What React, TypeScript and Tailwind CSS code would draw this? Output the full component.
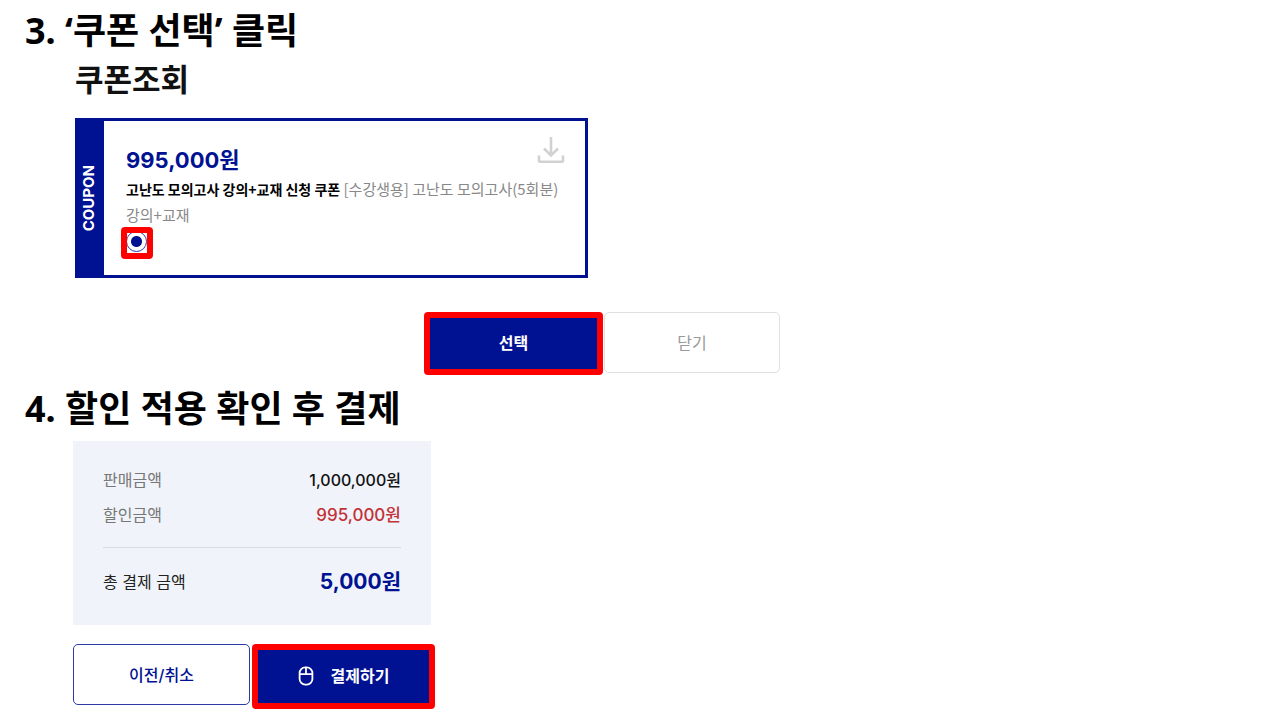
import type { ReactNode } from 'react';

const koreanFont = "font-['Noto_Sans_CJK_KR',sans-serif]";
const uiFont = "font-[Inter,'Noto_Sans_CJK_KR',sans-serif]";

function StepHeading({ children }: { children: ReactNode }) {
  return (
    <h2 className="font-['Noto_Sans','Noto_Sans_CJK_KR',sans-serif] text-[36px] leading-[46px] font-bold text-black">
      {children}
    </h2>
  );
}

function DownloadIcon() {
  return (
    <svg viewBox="0 0 28 28" className="size-7" fill="none" stroke="#d2d2d2" strokeWidth="2.6" aria-hidden="true">
      <path d="M14 1v18M7 12.5l7 7 7-7M2 19.5v5.2a1 1 0 0 0 1 1h22a1 1 0 0 0 1-1v-5.2" />
    </svg>
  );
}

function MouseIcon() {
  return (
    <svg viewBox="0 0 16 20" className="h-5 w-4" fill="none" stroke="currentColor" strokeWidth="1.8" aria-hidden="true">
      <rect x="1.6" y="1.4" width="12.8" height="17.2" rx="5.6" />
      <path d="M1.6 8.2h12.8M8 1.4v6.8" />
    </svg>
  );
}

function CouponCard() {
  return (
    <article className="relative flex w-full max-w-[513px] border-[3px] border-[#001292] bg-white">
      <div className="flex w-[26px] shrink-0 items-center justify-center bg-[#001292]">
        <span className="rotate-180 pl-1 text-[15px] leading-5 font-bold text-white [writing-mode:vertical-rl]">COUPON</span>
      </div>
      <div className="flex-1 pt-[23px] pr-5 pb-4 pl-[22px]">
        <p className="text-[22px] leading-8 font-bold text-[#001292]">995,000원</p>
        <p className={`${koreanFont} text-[15px] leading-[25px] text-[#888888]`}>
          <label htmlFor="coupon" className="text-[14px] font-bold text-black">
            고난도 모의고사 강의+교재 신청 쿠폰
          </label>{' '}
          [수강생용] 고난도 모의고사(5회분) 강의+교재
        </p>
        <div className="-ml-[5px] flex size-8 items-start justify-center rounded-[4px] bg-[#ff0000] p-[6px]">
          <div className="flex size-5 items-end justify-start overflow-hidden bg-white pb-px">
            <input
              id="coupon"
              type="radio"
              name="coupon"
              defaultChecked
              className="-ml-px size-[21px] shrink-0 appearance-none rounded-full border border-[#2b3aa5] bg-[radial-gradient(circle,#001292_0,#001292_5px,#ffffff_6px)]"
            />
          </div>
        </div>
      </div>
      <button type="button" aria-label="쿠폰 다운로드" className="absolute top-[15px] right-5">
        <DownloadIcon />
      </button>
    </article>
  );
}

export default function App() {
  return (
    <main className={`${uiFont} min-h-screen bg-white pt-2 pb-3 pl-[25px]`}>
      <section>
        <StepHeading>3. ‘쿠폰 선택’ 클릭</StepHeading>
        <div className="max-w-[755px] pl-[50px]">
          <h3 className="pt-[2px] text-[31px] leading-[48px] font-bold text-[#111111]">쿠폰조회</h3>
          <div className="pt-[14px]">
            <CouponCard />
          </div>
          <div className="mt-[34px] flex items-start justify-end gap-px">
            <div className="rounded-[4px] bg-[#ff0000] p-[6px]">
              <button type="button" className="block h-[51px] w-[167px] bg-[#001292] pb-[2px] text-[16px] font-semibold text-white">
                선택
              </button>
            </div>
            <button type="button" className="h-[61px] w-[176px] rounded-[5px] border border-[#e0e0e0] text-[16px] text-[#999999]">
              닫기
            </button>
          </div>
        </div>
      </section>

      <section className="mt-[11px]">
        <StepHeading>4. 할인 적용 확인 후 결제</StepHeading>
        <div className="pl-12">
          <dl className="mt-[9px] max-w-[358px] bg-[#f0f3f9] px-[30px] pt-[22px] pb-[25px] text-[16px]">
            <div className="flex justify-between leading-[35px]">
              <dt className="text-[#777777]">판매금액</dt>
              <dd className="font-medium text-[#111111]">1,000,000원</dd>
            </div>
            <div className="flex justify-between leading-[35px]">
              <dt className="text-[#777777]">할인금액</dt>
              <dd className="text-[17px] font-medium text-[#c23238]">995,000원</dd>
            </div>
            <div className="mt-[14px] flex justify-between border-t border-[#d8dbe1] pt-4 leading-9">
              <dt className="text-[#222222]">총 결제 금액</dt>
              <dd className="text-[21px] font-bold text-[#001292]">5,000원</dd>
            </div>
          </dl>
          <div className="mt-[19px] flex items-start gap-[2px]">
            <button type="button" className="h-[61px] w-[177px] rounded-[5px] border border-[#2b3aa5] text-[16px] font-medium text-[#001292]">
              이전/취소
            </button>
            <div className="rounded-[4px] bg-[#ff0000] p-[6px]">
              <button
                type="button"
                className="flex h-[53px] w-[171px] items-center justify-center gap-[17px] bg-[#001292] pb-[2px] text-[16px] font-semibold text-white"
              >
                <MouseIcon />
                결제하기
              </button>
            </div>
          </div>
        </div>
      </section>
    </main>
  );
}
